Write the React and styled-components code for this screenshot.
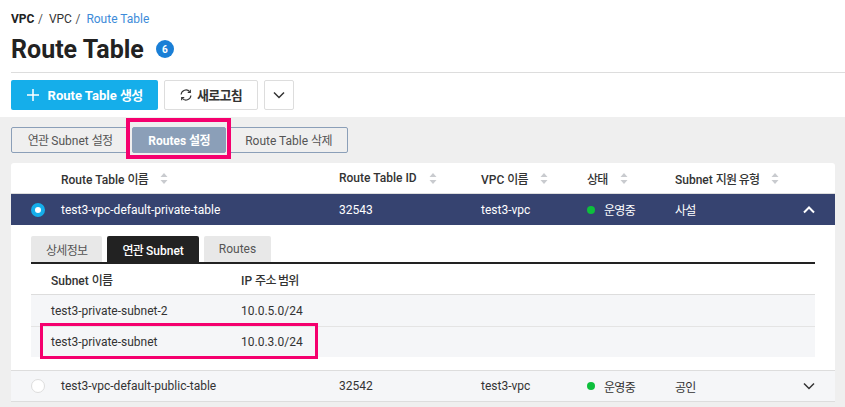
import React from 'react'
import styled, { createGlobalStyle } from 'styled-components'

const rows = {
  privateTable: { name: 'test3-vpc-default-private-table', id: '32543', vpc: 'test3-vpc', status: '운영중', type: '사설' },
  publicTable: { name: 'test3-vpc-default-public-table', id: '32542', vpc: 'test3-vpc', status: '운영중', type: '공인' },
}

function SortIcon() {
  return (
    <svg width="8" height="11" viewBox="0 0 8 11" fill="#c9cbcf">
      <path d="M4 0 L7.5 4 H0.5 Z" />
      <path d="M4 11 L7.5 7 H0.5 Z" />
    </svg>
  )
}

function Chevron({ up, color }) {
  return (
    <svg width="12" height="8" viewBox="0 0 12 8" fill="none" stroke={color} strokeWidth={up ? 2 : 1.5}>
      <path d={up ? 'M1 6.5 L6 1.5 L11 6.5' : 'M1 1.5 L6 6.5 L11 1.5'} />
    </svg>
  )
}

function App() {
  return (
    <Page>
      <GlobalStyle />
      <Header>
        <Breadcrumb>
          <b>VPC</b>
          <Sep>/</Sep>
          <span>VPC</span>
          <Sep>/</Sep>
          <Current>Route Table</Current>
        </Breadcrumb>
        <TitleRow>
          <Title>Route Table</Title>
          <Count>6</Count>
        </TitleRow>
        <Toolbar>
          <PrimaryButton>
            <svg width="12" height="12" viewBox="0 0 12 12" stroke="#fff" strokeWidth="1.5">
              <path d="M6 0 V12 M0 6 H12" />
            </svg>
            <ButtonLabel>Route Table <Ko>생성</Ko></ButtonLabel>
          </PrimaryButton>
          <OutlineButton>
            <svg width="12" height="12" viewBox="0 0 13 13" fill="none" stroke="#333" strokeWidth="1.2">
              <path d="M1.2 6 A5.3 5.3 0 0 1 10.6 3 M11.8 7 A5.3 5.3 0 0 1 2.4 10" />
              <path d="M11.2 0.8 V3.6 H8.4 M1.8 12.2 V9.4 H4.6" />
            </svg>
            <ButtonLabel><Ko>새로고침</Ko></ButtonLabel>
          </OutlineButton>
          <IconButton>
            <Chevron color="#333" />
          </IconButton>
        </Toolbar>
      </Header>

      <Actions>
        <ActionButton $width={118}><Ko>연관</Ko> Subnet <Ko>설정</Ko></ActionButton>
        <ActionHighlight>
          <ActionButton $width={94} $filled>Routes <Ko>설정</Ko></ActionButton>
        </ActionHighlight>
        <ActionButton $width={119}>Route Table <Ko>삭제</Ko></ActionButton>
      </Actions>

      <Card>
        <HeadRow>
          <span />
          <HeadCell><span>Route Table <Ko>이름</Ko></span><SortIcon /></HeadCell>
          <HeadCell><span>Route Table ID</span><SortIcon /></HeadCell>
          <HeadCell><span>VPC <Ko>이름</Ko></span><SortIcon /></HeadCell>
          <HeadCell><Ko>상태</Ko><SortIcon /></HeadCell>
          <HeadCell><span>Subnet <Ko>지원 유형</Ko></span><SortIcon /></HeadCell>
        </HeadRow>

        <Row $selected>
          <Radio $checked />
          <span>{rows.privateTable.name}</span>
          <span>{rows.privateTable.id}</span>
          <span>{rows.privateTable.vpc}</span>
          <Status><Dot /><Ko>{rows.privateTable.status}</Ko></Status>
          <Ko>{rows.privateTable.type}</Ko>
          <Toggle><Chevron up color="#fff" /></Toggle>
        </Row>

        <Detail>
          <Tabs>
            <Tab><Ko>상세정보</Ko></Tab>
            <Tab $active><span><Ko>연관</Ko> Subnet</span></Tab>
            <Tab>Routes</Tab>
          </Tabs>
          <SubTable>
            <SubHead>
              <span>Subnet <Ko>이름</Ko></span>
              <span>IP <Ko>주소 범위</Ko></span>
            </SubHead>
            <SubRow>
              <span>test3-private-subnet-2</span>
              <span>10.0.5.0/24</span>
            </SubRow>
            <SubRow>
              <span>test3-private-subnet</span>
              <span>10.0.3.0/24</span>
              <SubHighlight />
            </SubRow>
          </SubTable>
        </Detail>

        <Row>
          <Radio />
          <span>{rows.publicTable.name}</span>
          <span>{rows.publicTable.id}</span>
          <span>{rows.publicTable.vpc}</span>
          <Status><Dot /><Ko>{rows.publicTable.status}</Ko></Status>
          <Ko>{rows.publicTable.type}</Ko>
          <Toggle><Chevron color="#333" /></Toggle>
        </Row>
      </Card>
    </Page>
  )
}

export default App

const GlobalStyle = createGlobalStyle`
  html, body {
    margin: 0;
    height: 100%;
    overflow: hidden;
    background: #efefef;
  }
  * {
    box-sizing: border-box;
  }
  body {
    font-family: Roboto, "Noto Sans CJK KR", sans-serif;
    font-size: 12px;
    color: #333;
  }
`
const Page = styled.div`
  width: 845px;
  height: 407px;
`
// korean glyphs run narrower in the original font
const Ko = styled.span`
  letter-spacing: -0.7px;
`
const Header = styled.div`
  background: #fff;
  height: 117px;
  padding: 11px 0 0 11px;
`
const Breadcrumb = styled.div`
  display: flex;
  align-items: center;
  height: 15px;
  font-size: 12px;
  color: #333;
  b {
    font-weight: 700;
    color: #222;
  }
`
const Sep = styled.span`
  margin: 0 6px 0 3.5px;
  color: #555;
`
const Current = styled.span`
  color: #3d8bd9;
`
const TitleRow = styled.div`
  display: flex;
  align-items: center;
  height: 47px;
  border-bottom: 1px solid #ddd;
`
const Title = styled.h1`
  margin: 0 12px 0 0;
  font-size: 25px;
  font-weight: 700;
  color: #222;
`
const Count = styled.span`
  width: 18px;
  height: 18px;
  border-radius: 50%;
  background: #1a7fd6;
  color: #fff;
  font-size: 10px;
  font-weight: 700;
  display: flex;
  align-items: center;
  justify-content: center;
`
const Toolbar = styled.div`
  display: flex;
  gap: 6px;
  margin-top: 7px;
`
const ButtonLabel = styled.span`
  margin-bottom: 2px;
`
const PrimaryButton = styled.button`
  width: 147px;
  height: 30px;
  border: 0;
  border-radius: 2px;
  background: #15aeea;
  color: #fff;
  font: 700 13px Roboto, "Noto Sans CJK KR", sans-serif;
  display: flex;
  align-items: center;
  justify-content: center;
  gap: 9px;
`
const OutlineButton = styled.button`
  width: 94px;
  height: 30px;
  border: 1px solid #ddd;
  border-radius: 2px;
  background: #fff;
  color: #333;
  font: 700 13px Roboto, "Noto Sans CJK KR", sans-serif;
  display: flex;
  align-items: center;
  justify-content: center;
  gap: 5px;
`
const IconButton = styled.button`
  width: 30px;
  height: 30px;
  border: 1px solid #ddd;
  border-radius: 2px;
  background: #fff;
  display: flex;
  align-items: center;
  justify-content: center;
`
const Actions = styled.div`
  display: flex;
  gap: 3px;
  padding: 10px 0 0 11px;
  height: 46px;
`
const ActionButton = styled.button`
  width: ${props => props.$width}px;
  height: 26px;
  padding: 0 0 2px;
  border: 1px solid #8b9fb8;
  border-radius: 2px;
  background: ${props => (props.$filled ? '#8b9fb8' : 'transparent')};
  color: ${props => (props.$filled ? '#fff' : '#555')};
  font: ${props => (props.$filled ? 700 : 400)} 12px Roboto, "Noto Sans CJK KR", sans-serif;
`
const ActionHighlight = styled.div`
  position: relative;
  &::after {
    content: '';
    box-sizing: border-box;
    position: absolute;
    left: -6px;
    top: -9px;
    width: 105px;
    height: 41px;
    border: 4px solid #f5006e;
    pointer-events: none;
  }
`
const Card = styled.div`
  margin: 0 10px 0 11px;
  background: #fff;
  border-radius: 3px 3px 0 0;
`
const cols = `50px 278px 142px 106px 88px 1fr`
const HeadRow = styled.div`
  display: grid;
  grid-template-columns: ${cols};
  align-items: center;
  height: 31px;
  border-bottom: 1px solid #ddd;
`
const HeadCell = styled.div`
  display: flex;
  align-items: center;
  gap: 12px;
  font-weight: 500;
  color: #333;
`
const Row = styled.div`
  display: grid;
  grid-template-columns: ${cols} 32px;
  align-items: center;
  height: ${props => (props.$selected ? '31px' : '32px')};
  background: ${props => (props.$selected ? '#364370' : '#f5f6f8')};
  color: ${props => (props.$selected ? '#fff' : '#333')};
  border-top: ${props => (props.$selected ? '0' : '1px solid #ddd')};
  border-bottom: ${props => (props.$selected ? '0' : '1px solid #ddd')};
`
const Radio = styled.span`
  justify-self: start;
  margin-left: 20px;
  width: 14px;
  height: 14px;
  border-radius: 50%;
  background: #fff;
  border: ${props => (props.$checked ? '4px solid #15aeea' : '1px solid #ddd')};
`
const Status = styled.span`
  display: flex;
  align-items: center;
  gap: 9px;
`
const Dot = styled.i`
  width: 8px;
  height: 8px;
  border-radius: 50%;
  background: #0dbf3c;
`
const Toggle = styled.span`
  display: flex;
  align-items: center;
`
const Detail = styled.div`
  padding: 11px 20px 13px;
  background: #fff;
`
const Tabs = styled.div`
  display: flex;
  gap: 5px;
`
const Tab = styled.div`
  height: 26px;
  padding: 0 15px;
  border-radius: 2px 2px 0 0;
  background: ${props => (props.$active ? '#222' : '#e8e8e8')};
  color: ${props => (props.$active ? '#fff' : '#555')};
  font-weight: ${props => (props.$active ? 500 : 400)};
  display: flex;
  align-items: center;
`
const SubTable = styled.div`
  border-top: 2px solid #222;
`
const SubHead = styled.div`
  display: grid;
  grid-template-columns: 190px 1fr;
  align-items: center;
  height: 31px;
  padding-left: 20px;
  font-weight: 500;
  border-bottom: 1px solid #ddd;
`
const SubRow = styled.div`
  position: relative;
  display: grid;
  grid-template-columns: 190px 1fr;
  align-items: center;
  height: 32px;
  padding-left: 20px;
  background: #f5f6f8;
  border-bottom: 1px solid #e4e4e4;
  &:last-child {
    height: 30px;
    border-bottom: 0;
  }
`
const SubHighlight = styled.div`
  position: absolute;
  left: 9px;
  top: -4px;
  width: 278px;
  height: 36px;
  border: 3px solid #f5006e;
  pointer-events: none;
`
